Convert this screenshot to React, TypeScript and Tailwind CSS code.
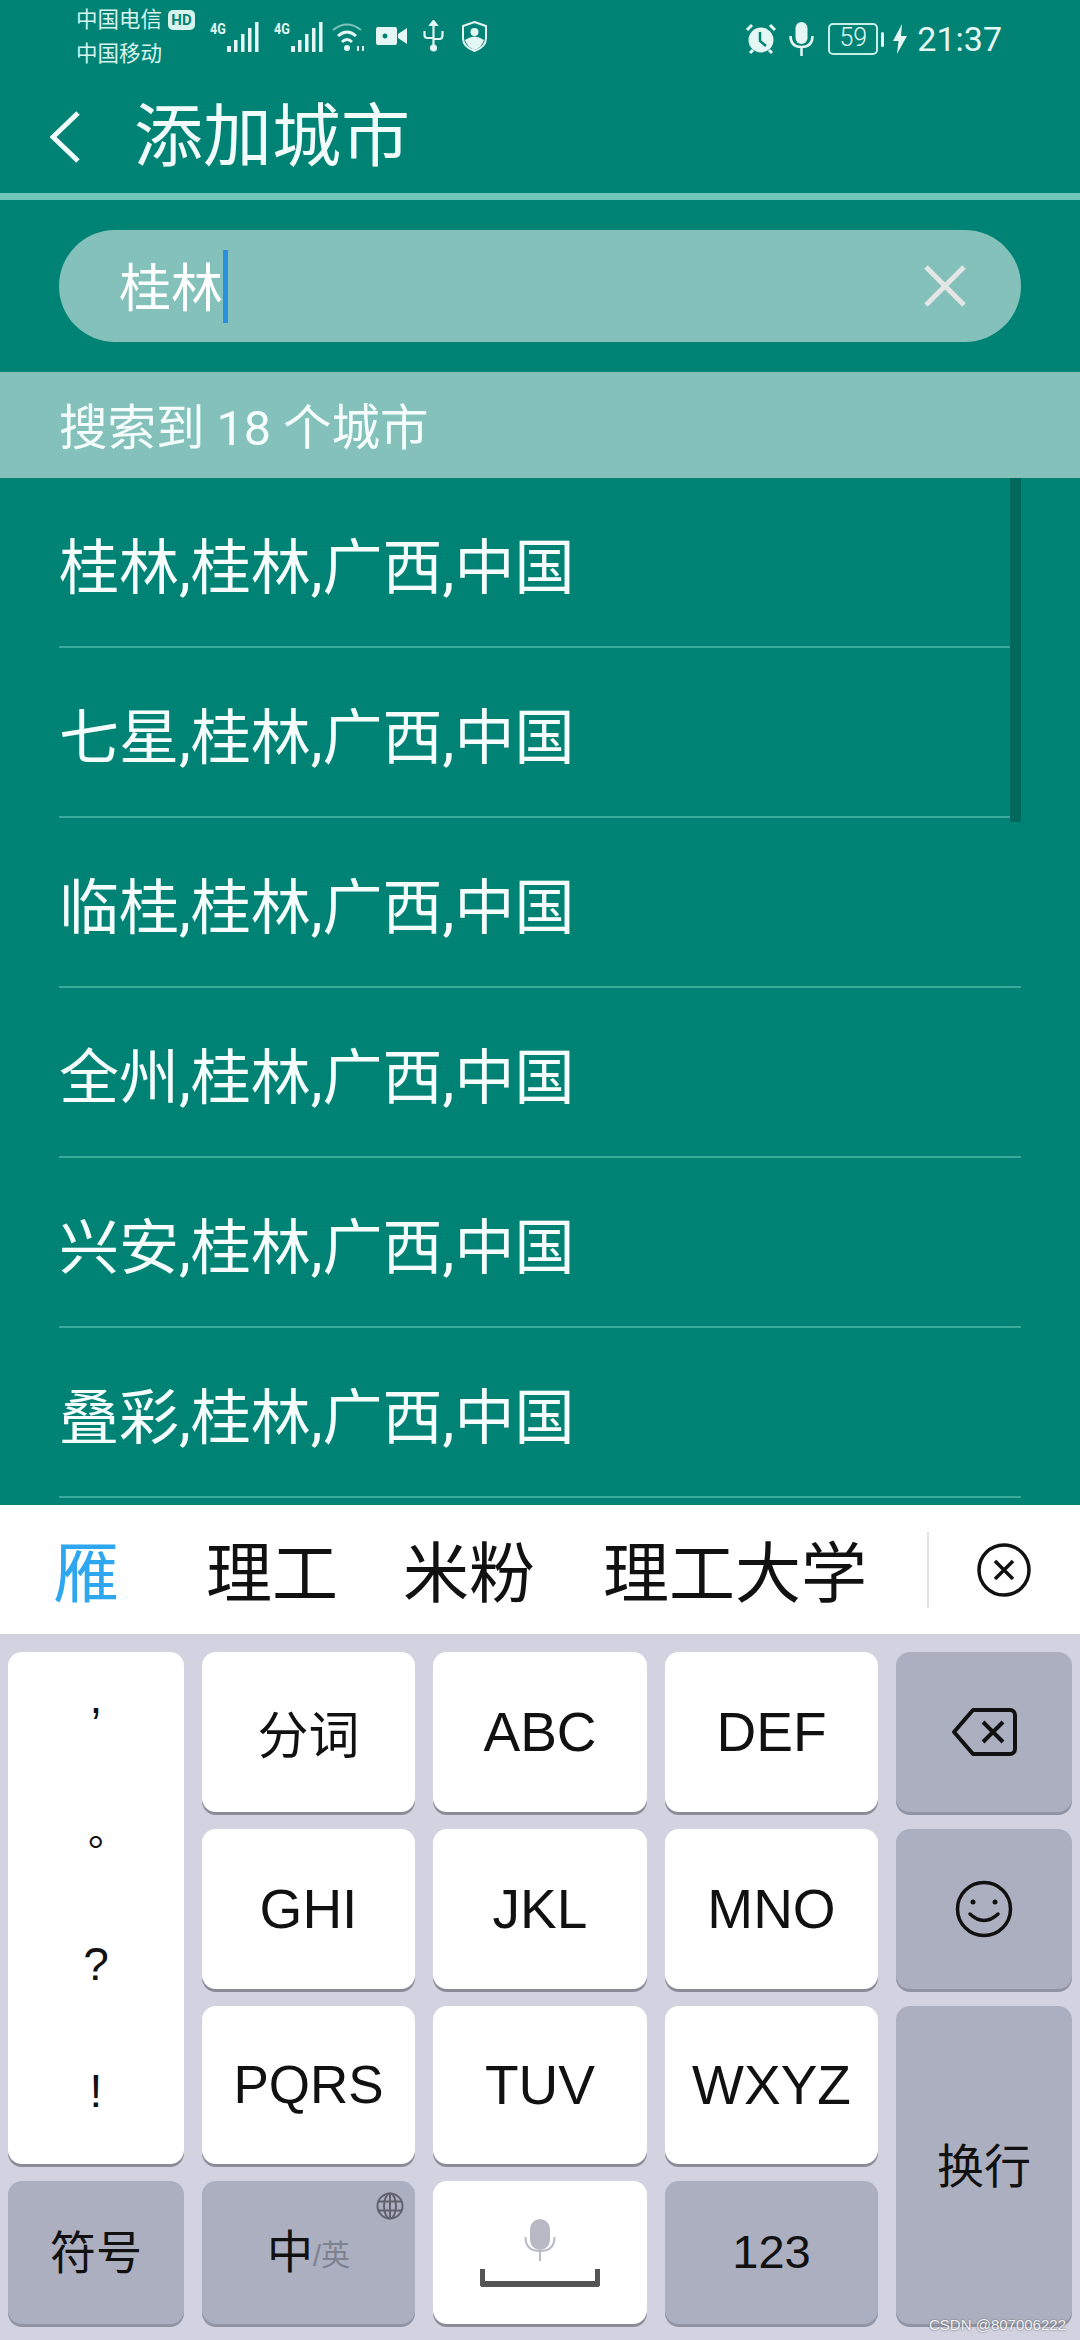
const cities = ["桂林", "七星", "临桂", "全州", "兴安", "叠彩"]

const cjk = "font-['Roboto','Noto_Sans_CJK_SC',sans-serif]"
const arial = "font-['Liberation_Sans','Noto_Sans_CJK_SC',sans-serif]"
const keyBase = "rounded-[14px] flex items-center text-[#111]"
const whiteKey = `${keyBase} bg-white shadow-[0_3px_0_#8b8b97] justify-center`
const grayKey = `${keyBase} bg-[#acafbf] shadow-[0_3px_0_#9094a4] justify-center`

function Signal() {
  return (
    <div className="flex items-start w-[50px] h-[32px] relative">
      <span className="absolute left-0 top-0 text-[14px] leading-[14px] font-bold text-[#e5f7f4] font-['Roboto',sans-serif] scale-x-90 origin-left">
        4G
      </span>
      <svg viewBox="0 0 50 30" className="w-[50px] h-[30px] absolute left-0 top-0" fill="#e5f7f4">
        <rect x="17" y="24" width="4" height="6" />
        <rect x="24" y="18" width="3.5" height="12" />
        <rect x="31" y="12" width="3.5" height="18" />
        <rect x="38" y="6" width="3.5" height="24" />
        <rect x="45" y="0" width="3.5" height="30" />
      </svg>
    </div>
  )
}

function StatusBar() {
  return (
    <div className={`h-[81px] flex items-start pl-[76px] pr-[78px] pt-[3px] text-[#d8f3ee] ${cjk}`}>
      <div className="w-[120px] text-[21.5px] leading-[34px]">
        <div className="flex items-center">
          <span>中国电信</span>
          <span className="ml-[6px] h-[20px] w-[27px] bg-[#d8f3ee] rounded-[5px] text-[#008375] text-[15px] leading-[20px] font-bold text-center font-['Roboto',sans-serif]">
            HD
          </span>
        </div>
        <div>中国移动</div>
      </div>
      <div className="ml-[14px] mt-[19px] flex items-start">
        <Signal />
        <div className="ml-[14px]">
          <Signal />
        </div>
        {/* wifi */}
        <svg viewBox="0 0 36 30" className="ml-[8px] w-[36px] h-[30px]" fill="none" stroke="#e5f7f4">
          <path d="M1 8 Q15 -3 29 8" strokeWidth="2" stroke="#7fc4ba" />
          <path d="M6 14 Q15 6 24 14" strokeWidth="3" />
          <path d="M10 20 Q15 15 20 20" strokeWidth="3" />
          <circle cx="15" cy="26" r="3" fill="#e5f7f4" stroke="none" />
          <path d="M26 24 v5 M31 24 v5" strokeWidth="2" />
        </svg>
        {/* video */}
        <svg viewBox="0 0 31 18" className="ml-[8px] mt-[5px] w-[31px] h-[18px]">
          <path
            fillRule="evenodd"
            fill="#e5f7f4"
            d="M2 0h17a2 2 0 0 1 2 2v14a2 2 0 0 1-2 2H2a2 2 0 0 1-2-2V2a2 2 0 0 1 2-2zM9 6.5a2.5 2.5 0 1 0 0.01 0zM22 7l9-6v16l-9-6z"
          />
        </svg>
        {/* usb */}
        <svg viewBox="0 0 21 32" className="ml-[16px] -mt-[2px] w-[21px] h-[32px]" fill="none" stroke="#e5f7f4" strokeWidth="2.2">
          <path d="M10.5 3v25M1.5 11v4q0 3 3 3h6M19.5 11v4q0 4 -3 4h-6" />
          <path d="M7.5 5l3-4 3 4z" fill="#e5f7f4" />
          <circle cx="10.5" cy="28" r="2.5" fill="#e5f7f4" />
        </svg>
        {/* shield */}
        <svg viewBox="0 0 25 31" className="ml-[18px] -mt-[1px] w-[25px] h-[31px]">
          <path d="M12.5 1L24 5v12q0 9-11.5 13Q1 26 1 17V5z" fill="none" stroke="#e5f7f4" strokeWidth="2" />
          <circle cx="12.5" cy="11" r="4" fill="#e5f7f4" />
          <path d="M3 19q9.500-7 19 0q-2 7-9.500 10Q5 26 3 19z" fill="#e5f7f4" />
        </svg>
      </div>
      <div className="ml-auto mt-[19px] flex items-center h-[34px]">
        {/* alarm */}
        <svg viewBox="0 0 32 32" className="w-[32px] h-[32px]">
          <circle cx="16" cy="17" r="12.500" fill="#e5f7f4" />
          <path d="M15 9v9l6 5" fill="none" stroke="#008375" strokeWidth="2.500" />
          <path d="M2 7l5-5M30 7l-5-5M5 30l3-3M27 30l-3-3" stroke="#e5f7f4" strokeWidth="3" />
        </svg>
        {/* mic */}
        <svg viewBox="0 0 25 34" className="ml-[12px] w-[25px] h-[34px]" fill="none">
          <rect x="6.500" y="0" width="12" height="22" rx="6" fill="#e5f7f4" />
          <path d="M1.500 14q0 11 11 11t11-11M12.500 25v9" stroke="#e5f7f4" strokeWidth="2.500" />
        </svg>
        <div className="ml-[14px] w-[50px] h-[32px] border-[2.500px] border-[#c6efe8] rounded-[5px] text-[25px] leading-[26px] text-center text-[#e5f7f4] font-light">
          59
        </div>
        <div className="ml-[3px] w-[3px] h-[15px] bg-[#e5f7f4] rounded-full" />
        <svg viewBox="0 0 14 30" className="ml-[9px] w-[14px] h-[30px]">
          <path d="M9 0L0 17h5.500L4 30l10-18H8z" fill="#e5f7f4" />
        </svg>
        <span className="ml-[10px] text-[34px] leading-[34px] text-[#e5f7f4] font-normal">21:37</span>
      </div>
    </div>
  )
}

function Header() {
  return (
    <>
      <div className={`h-[112px] flex items-center pl-[50px] text-[#f1fcfa] ${cjk}`}>
        <svg viewBox="0 0 30 52" className="w-[30px] h-[52px]" fill="none" stroke="#f1fcfa" strokeWidth="5">
          <path d="M28 2L3 26l25 24" />
        </svg>
        <span className="ml-[54px] text-[69px] leading-none">添加城市</span>
      </div>
      <div className="h-[7px] bg-[#6fc6b9]" />
    </>
  )
}

function SearchBox() {
  return (
    <div className="px-[59px] py-[30px]">
      <div className={`h-[112px] rounded-full bg-[#84c1ba] flex items-center pl-[60px] pr-[54px] ${cjk}`}>
        <span className="text-[52px] leading-none text-white pt-[8px]">桂林</span>
        <span className="w-[5px] h-[73px] bg-[#2b8fe0]" />
        <svg viewBox="0 0 44 44" className="ml-auto w-[44px] h-[44px]" fill="none" stroke="#e3e6e5" strokeWidth="5">
          <path d="M3 3l38 38M41 3L3 41" />
        </svg>
      </div>
    </div>
  )
}

function CityList() {
  return (
    <div className="relative flex-1 overflow-hidden">
      <div className="px-[59px]">
        {cities.map((c) => (
          <div
            key={c}
            className={`h-[170px] flex items-center border-b-2 border-[#3da99b] pt-[14px] text-[60px] leading-none text-[#f4fdfb] ${cjk}`}
          >
            {c},桂林,广西,中国
          </div>
        ))}
      </div>
      <div className="absolute top-0 right-[59px] w-[11px] h-[344px] bg-[#00685c]" />
    </div>
  )
}

function CandidateBar() {
  return (
    <div className={`h-[129px] bg-white flex items-center text-[66px] leading-none text-[#111] ${arial}`}>
      <div className="flex items-center pt-[8px]">
        <span className="ml-[53px] text-[#2ea7f0]">雁</span>
        <span className="ml-[87px]">理工</span>
        <span className="ml-[65px]">米粉</span>
        <span className="ml-[68px] w-[264px] whitespace-nowrap">理工大学</span>
      </div>
      <div className="ml-[60px] w-[2px] h-[76px] bg-[#e2e2e8]" />
      <svg viewBox="0 0 54 54" className="ml-[48px] w-[54px] h-[54px]" fill="none" stroke="#111" strokeWidth="3.500">
        <circle cx="27" cy="27" r="25" />
        <path d="M18 18l18 18M36 18L18 36" />
      </svg>
    </div>
  )
}

function Keyboard() {
  return (
    <div className={`flex-none h-[706px] bg-[#d2d2e0] pt-[18px] pl-[8px] ${arial}`}>
      <div className="grid grid-cols-[176px_213px_214px_213px_176px] grid-rows-[160px_160px_158px_143px] gap-x-[18px] gap-y-[17px]">
        <div className={`row-span-3 ${whiteKey} flex-col text-[46px]`}>
          <span className="h-[127px] flex items-center pb-[40px]">,</span>
          <span className="h-[127px] flex items-center font-['Noto_Sans_CJK_SC',sans-serif] text-[40px] pl-[24px] pb-[34px]">。</span>
          <span className="h-[127px] flex items-center pb-[14px]">?</span>
          <span className="h-[127px] flex items-center pb-[14px]">!</span>
        </div>
        <div className={`${whiteKey} text-[51px] pt-[10px]`}>分词</div>
        <div className={`${whiteKey} text-[55px]`}>ABC</div>
        <div className={`${whiteKey} text-[55px]`}>DEF</div>
        <div className={grayKey}>
          <svg viewBox="0 0 66 48" className="w-[66px] h-[48px]" fill="none" stroke="#111" strokeWidth="4">
            <path d="M22 2h37a5 5 0 0 1 5 5v34a5 5 0 0 1-5 5H22L3 24z" strokeLinejoin="round" />
            <path d="M32 14l20 20M52 14L32 34" />
          </svg>
        </div>

        <div className={`${whiteKey} text-[55px]`}>GHI</div>
        <div className={`${whiteKey} text-[55px]`}>JKL</div>
        <div className={`${whiteKey} text-[55px]`}>MNO</div>
        <div className={grayKey}>
          <svg viewBox="0 0 58 58" className="w-[58px] h-[58px]" fill="none" stroke="#111" strokeWidth="3.500">
            <circle cx="29" cy="29" r="26.500" />
            <circle cx="18" cy="22" r="2.500" fill="#111" stroke="none" />
            <circle cx="40" cy="22" r="2.500" fill="#111" stroke="none" />
            <path d="M15 34q14 13 28 0" strokeLinecap="round" />
          </svg>
        </div>

        <div className={`${whiteKey} text-[53px]`}>PQRS</div>
        <div className={`${whiteKey} text-[55px]`}>TUV</div>
        <div className={`${whiteKey} text-[55px]`}>WXYZ</div>
        <div className={`row-span-2 ${grayKey} text-[47px] pt-[4px]`}>换行</div>

        <div className={`${grayKey} text-[46px] pt-[2px]`}>符号</div>
        <div className={`relative ${grayKey}`}>
          <span className="text-[46px]">中</span>
          <span className="text-[29px] text-[#7e8290] pt-[8px]">/英</span>
          {/* globe */}
          <svg viewBox="0 0 28 28" className="absolute right-[11px] top-[11px] w-[28px] h-[28px]" fill="none" stroke="#60636f" strokeWidth="2">
            <circle cx="14" cy="14" r="12.500" />
            <ellipse cx="14" cy="14" rx="6" ry="12.500" />
            <path d="M14 1v26M2 9.500h24M2 18.500h24" />
          </svg>
        </div>
        <div className={`${whiteKey} flex-col`}>
          {/* mic + space */}
          <svg viewBox="0 0 32 42" className="w-[32px] h-[42px] mb-[8px]" fill="none">
            <rect x="6" y="0" width="20" height="31" rx="10" fill="#b8b9c4" />
            <path d="M1.500 18q0 14 14.500 14t14.500-14M16 32v10" stroke="#b8b9c4" strokeWidth="2" />
          </svg>
          <div className="w-[120px] h-[18px] border-x-[5px] border-b-[6px] border-[#555] rounded-b-[3px]" />
        </div>
        <div className={`${grayKey} text-[47px]`}>123</div>
      </div>
    </div>
  )
}

export default function App() {
  return (
    <div className="relative w-[1080px] h-[2340px] bg-[#008375] flex flex-col overflow-hidden">
      <StatusBar />
      <Header />
      <SearchBox />
      <div className={`h-[106px] bg-[#84c1ba] flex items-center pl-[59px] pt-[8px] text-[48.500px] leading-none text-[#f4fdfb] ${cjk}`}>
        搜索到 18 个城市
      </div>
      <CityList />
      <CandidateBar />
      <Keyboard />
      <span className={`absolute right-[14px] bottom-[6px] text-[15px] leading-[18px] text-[#f2f2f6] [text-shadow:0_0_2px_#555] ${arial}`}>
        CSDN @807006222
      </span>
    </div>
  )
}
